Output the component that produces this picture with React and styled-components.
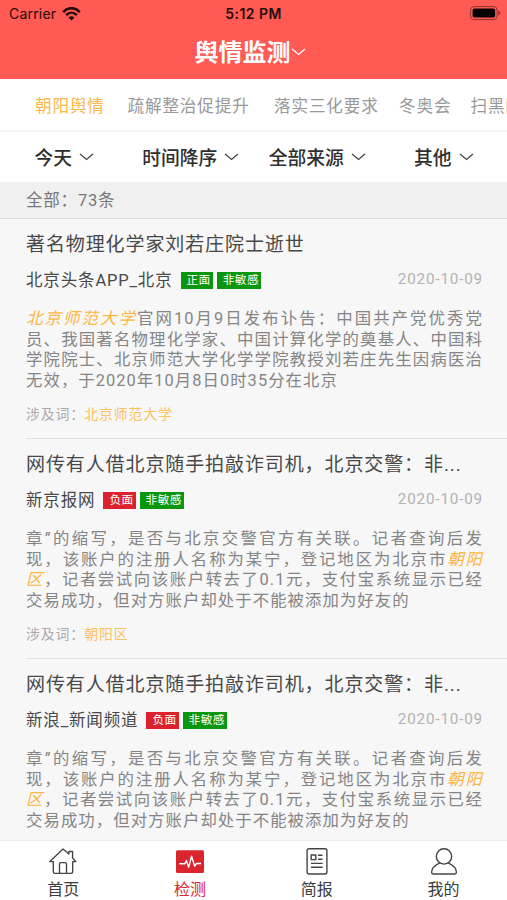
import React, { useState } from "react";
import styled, { createGlobalStyle } from "styled-components";

const GlobalStyle = createGlobalStyle`
  * {
    box-sizing: border-box;
  }
  body {
    margin: 0;
    overflow: hidden;
    font-family: Inter, "Noto Sans CJK SC", sans-serif;
    text-spacing-trim: space-all;
  }
`;

const Page = styled.div`
  display: flex;
  flex-direction: column;
  width: 507px;
  height: 900px;
  overflow: hidden;
  background-color: #f7f7f7;
`;

const Header = styled.header`
  flex: none;
  height: 79px;
  background-color: #ff5a54;
`;

const StatusBar = styled.div`
  display: grid;
  grid-template-columns: 1fr auto 1fr;
  align-items: center;
  height: 27px;
  padding: 0 6px 0 9px;
  font-size: 14px;
  line-height: 27px;
  color: #260b0a;
`;

const Carrier = styled.div`
  display: flex;
  align-items: center;
  gap: 6px;
  letter-spacing: 0.2px;
`;

const Clock = styled.div`
  margin-right: 3px;
  font-weight: 600;
  letter-spacing: 0.45px;
`;

const Battery = styled.div`
  display: flex;
  justify-content: flex-end;
`;

const PageTitle = styled.h1`
  display: flex;
  justify-content: center;
  align-items: center;
  height: 46px;
  margin: 0;
  padding-right: 7px;
  font-size: 24px;
  font-weight: 600;
  color: white;

  svg {
    margin-top: 3px;
  }
`;

const Topics = styled.nav`
  flex: none;
  display: flex;
  align-items: center;
  height: 53px;
  padding: 3px 0 0 35px;
  overflow: hidden;
  background-color: white;
  border-bottom: 2px solid #f5f5f5;
`;

const Topic = styled.button`
  flex: none;
  width: ${(props) => props.$width}px;
  padding: 0;
  border: none;
  background: none;
  font: inherit;
  font-size: 16.6px;
  letter-spacing: 0.85px;
  line-height: 24px;
  text-align: left;
  white-space: nowrap;
  color: ${(props) => (props.$active ? "#fbb84a" : "#999")};
`;

const Filters = styled.div`
  flex: none;
  display: grid;
  grid-template-columns: repeat(4, 1fr);
  height: 50px;
  padding: 0 0 2px 1px;
  background-color: white;
`;

const Filter = styled.div`
  display: flex;
  justify-content: center;
  align-items: center;
  gap: 7px;
  font-size: 18.8px;
  font-weight: 500;
  color: #2e2e2e;

  svg {
    margin-top: 1px;
  }
`;

const Total = styled.div`
  flex: none;
  height: 37px;
  padding-left: 26px;
  background-color: #f0f0f0;
  border-bottom: 1px solid #dcdcdc;
  font-family: Roboto, "Noto Sans CJK SC", sans-serif;
  font-size: 16.5px;
  letter-spacing: 0.8px;
  line-height: 37px;
  color: #777;
`;

const List = styled.main`
  flex: 1;
  min-height: 0;
  overflow: hidden;
  padding-left: 26px;
  font-family: Roboto, "Noto Sans CJK SC", sans-serif;
`;

const Article = styled.article`
  height: 220px;
  padding: 11px 25px 0 0;
  border-bottom: 1px solid #e2e2e2;

  &:last-child {
    height: auto;
    border-bottom: none;
  }
`;

const ArticleTitle = styled.h2`
  margin: 0;
  font-size: 19px;
  font-weight: 400;
  letter-spacing: 0.9px;
  line-height: 30px;
  white-space: nowrap;
  color: #484848;
`;

const Meta = styled.div`
  display: flex;
  align-items: center;
  height: 24px;
  margin-top: 7px;
`;

const Source = styled.span`
  margin-right: 8px;
  font-size: 16.5px;
  letter-spacing: 0.85px;
  color: #484848;
`;

const Badge = styled.span`
  height: 17px;
  margin: 3px 4px 0 0;
  padding: 0 2px 0 6px;
  background-color: ${(props) => (props.$negative ? "#dc222c" : "#0a960f")};
  font-size: 11.7px;
  letter-spacing: 0.4px;
  line-height: 17px;
  color: white;
`;

const DateText = styled.time`
  margin-left: auto;
  margin-right: -1px;
  font-size: 15.2px;
  letter-spacing: 0.85px;
  color: #b2b2b2;
`;

const Summary = styled.div`
  margin-top: 18px;
  font-size: 16.4px;
  line-height: 20.5px;
  letter-spacing: 1.05px;
  color: #858585;
`;

const Line = styled.div`
  height: 20.5px;
  margin-right: -1px;
  white-space: nowrap;
  text-align-last: justify;

  &:last-child {
    text-align-last: left;
  }
`;

const Keyword = styled.em`
  color: #fdb53f;
`;

const Related = styled.div`
  margin-top: 12px;
  font-size: 13.9px;
  letter-spacing: 0.9px;
  line-height: 22px;
  color: #aaa;

  span {
    margin-left: -1px;
    color: #fdc15e;
  }
`;

const TabBar = styled.nav`
  flex: none;
  display: grid;
  grid-template-columns: repeat(4, 1fr);
  height: 60px;
  background-color: white;
  border-top: 1px solid #eeeeee;
`;

const Tab = styled.button`
  display: flex;
  flex-direction: column;
  align-items: center;
  padding: 6px 0 0;
  border: none;
  background: none;
  font: inherit;
  font-size: 16px;
  line-height: 24px;
  color: ${(props) => (props.$active ? "#dc2630" : "#3c3c3c")};

  svg {
    flex: none;
    margin-bottom: 2px;
  }
`;

const Chevron = ({ color = "#444" }) => (
  <svg width="15" height="8" viewBox="0 0 15 8" fill="none" stroke={color} strokeWidth="1.3">
    <path d="M1 1l6.5 5.5L14 1" />
  </svg>
);

const WifiIcon = () => (
  <svg width="19" height="14" viewBox="0 0 19 14" fill="none" stroke="#260b0a" strokeWidth="2.6">
    <path d="M1.2 5.1C6-.1 13-.1 17.8 5.1M4.2 8.1c3.1-3.1 7.5-3.1 10.6 0" />
    <path d="M9.5 13.6 6.5 10.5q3-2.5 6 0z" fill="#260b0a" stroke="none" />
  </svg>
);

const BatteryIcon = () => (
  <svg width="31" height="15" viewBox="0 0 31 15">
    <rect x=".6" y=".6" width="26.5" height="13" rx="3.5" fill="none" stroke="#8d3430" />
    <rect x="2.6" y="2.6" width="22.5" height="9" rx="1.8" fill="#080202" />
    <path d="M28.4 4.7q2 .7 2 2.4t-2 2.4z" fill="#8d3430" />
  </svg>
);

const HomeIcon = () => (
  <svg width="28" height="28" viewBox="0 0 28 28" fill="none" stroke="#444" strokeWidth="1.35" strokeLinejoin="round">
    <path d="M4.3 14.6v10.2q0 1.5 1.5 1.5h16.4q1.5 0 1.5-1.5V14.6h3.2L23.6 11V4.5h-3.7v2.6L14 2 .9 14.6z" />
    <path d="M10.5 26V17q0-1.4 1.4-1.4h4.2q1.4 0 1.4 1.4v9" />
  </svg>
);

const MonitorIcon = () => (
  <svg width="28" height="28" viewBox="0 0 28 28" fill="none">
    <rect x="0" y="3.2" width="28" height="22.8" rx="1.5" fill="#db252e" />
    <path
      d="M3.4 16.7h5.4l1.6-3.2 2.2 6.7 3-11 3.1 10 1.8-2.7h4.6"
      stroke="white"
      strokeWidth="1.4"
      strokeLinejoin="round"
    />
  </svg>
);

const ReportIcon = () => (
  <svg width="28" height="28" viewBox="0 0 28 28" fill="none" stroke="#444" strokeWidth="1.4">
    <rect x="4.1" y="1.8" width="19.8" height="25.2" rx="2" />
    <path d="M8.2 8h4.6v4.6H8.2zM15 8.2h4.5M15 12.2h4.5M8 16.4h11.7M8 20.2h11.7" />
  </svg>
);

const UserIcon = () => (
  <svg width="28" height="28" viewBox="0 0 28 28" fill="none" stroke="#444" strokeWidth="1.4" strokeLinejoin="round">
    <circle cx="14" cy="9.4" r="7.7" />
    <path d="M9.8 15.8C5 18 1.6 21.3 1.6 25.3q0 1.7 1.7 1.7h21.4q1.7 0 1.7-1.7c0-4-3.4-7.3-8.2-9.5" />
  </svg>
);

const topics = [
  { name: "朝阳舆情", width: 92.5 },
  { name: "疏解整治促提升", width: 146.5 },
  { name: "落实三化要求", width: 125 },
  { name: "冬奥会", width: 71.5 },
  { name: "扫黑除恶", width: 92 },
];

const filters = ["今天", "时间降序", "全部来源", "其他"];

const policeNews = {
  title: "网传有人借北京随手拍敲诈司机，北京交警：非...",
  negative: true,
  date: "2020-10-09",
  lines: [
    "章”的缩写，是否与北京交警官方有关联。记者查询后发",
    <>现，该账户的注册人名称为某宁，登记地区为北京市<Keyword>朝阳</Keyword></>,
    <><Keyword>区</Keyword>，记者尝试向该账户转去了0.1元，支付宝系统显示已经</>,
    "交易成功，但对方账户却处于不能被添加为好友的",
  ],
};

const articles = [
  {
    id: 1,
    title: "著名物理化学家刘若庄院士逝世",
    source: "北京头条APP_北京",
    negative: false,
    date: "2020-10-09",
    lines: [
      <><Keyword>北京师范大学</Keyword>官网10月9日发布讣告：中国共产党优秀党</>,
      "员、我国著名物理化学家、中国计算化学的奠基人、中国科",
      "学院院士、北京师范大学化学学院教授刘若庄先生因病医治",
      "无效，于2020年10月8日0时35分在北京",
    ],
    related: "北京师范大学",
  },
  { ...policeNews, id: 2, source: "新京报网", related: "朝阳区" },
  { ...policeNews, id: 3, source: "新浪_新闻频道" },
];

const tabs = [
  { name: "首页", Icon: HomeIcon },
  { name: "检测", Icon: MonitorIcon },
  { name: "简报", Icon: ReportIcon },
  { name: "我的", Icon: UserIcon },
];

export default function App() {
  const [topic, setTopic] = useState("朝阳舆情");
  const [tab, setTab] = useState("检测");

  return (
    <Page>
      <GlobalStyle />
      <Header>
        <StatusBar>
          <Carrier>
            Carrier <WifiIcon />
          </Carrier>
          <Clock>5:12 PM</Clock>
          <Battery>
            <BatteryIcon />
          </Battery>
        </StatusBar>
        <PageTitle>
          舆情监测
          <Chevron color="white" />
        </PageTitle>
      </Header>
      <Topics>
        {topics.map((item) => (
          <Topic
            key={item.name}
            $width={item.width}
            $active={item.name === topic}
            onClick={() => setTopic(item.name)}
          >
            {item.name}
          </Topic>
        ))}
      </Topics>
      <Filters>
        {filters.map((name) => (
          <Filter key={name}>
            {name}
            <Chevron />
          </Filter>
        ))}
      </Filters>
      <Total>全部：73条</Total>
      <List>
        {articles.map((article) => (
          <Article key={article.id}>
            <ArticleTitle>{article.title}</ArticleTitle>
            <Meta>
              <Source>{article.source}</Source>
              <Badge $negative={article.negative}>
                {article.negative ? "负面" : "正面"}
              </Badge>
              <Badge>非敏感</Badge>
              <DateText>{article.date}</DateText>
            </Meta>
            <Summary>
              {article.lines.map((line, index) => (
                <Line key={index}>{line}</Line>
              ))}
            </Summary>
            {article.related && (
              <Related>
                涉及词：<span>{article.related}</span>
              </Related>
            )}
          </Article>
        ))}
      </List>
      <TabBar>
        {tabs.map(({ name, Icon }) => (
          <Tab key={name} $active={name === tab} onClick={() => setTab(name)}>
            <Icon />
            {name}
          </Tab>
        ))}
      </TabBar>
    </Page>
  );
}
